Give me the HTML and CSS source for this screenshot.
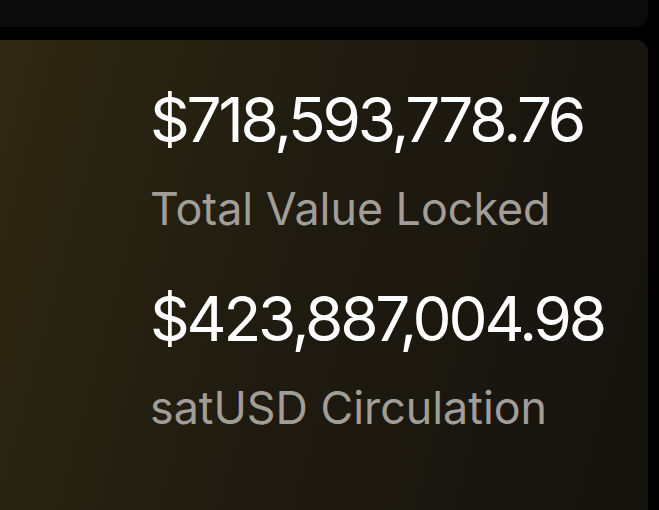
FILE: index.html
```html
<!DOCTYPE html>
<html lang="en">
<head>
    <meta charset="UTF-8">
    <meta name="viewport" content="width=device-width, initial-scale=1.0">
    <title>Protocol Stats</title>
    <link rel="stylesheet" href="styles.css">
</head>
<body>
    <div class="page">
        <div class="top-card"></div>

        <div class="stats-card">
            <div class="stat">
                <div class="stat-value">$718,593,778.76</div>
                <div class="stat-label">Total Value Locked</div>
            </div>
            <div class="stat">
                <div class="stat-value">$423,887,004.98</div>
                <div class="stat-label">satUSD Circulation</div>
            </div>
        </div>
    </div>
</body>
</html>
```

FILE: styles.css
```css
/* Reset */
* {
    margin: 0;
    padding: 0;
    box-sizing: border-box;
}

body {
    font-family: Inter, "Noto Sans", Arial, sans-serif;
    background-color: #000000;
    color: #ffffff;
    height: 510px;
    overflow: hidden;
}

.page {
    display: flex;
    flex-direction: column;
    gap: 13px;
    padding-right: 11px;
}

/* cut-off card above */
.top-card {
    height: 27px;
    background-color: #0b0b0b;
    border-radius: 0 0 12px 0;
}

.stats-card {
    height: 480px;
    border-radius: 0 12px 0 0;
    background: linear-gradient(105deg, #2f2812 0%, #1f1b10 45%, #15130f 100%);
    padding: 49px 0 0 150px;
    display: flex;
    flex-direction: column;
    gap: 56px;
}

.stat {
    display: flex;
    flex-direction: column;
    gap: 36px;
}

.stat-value {
    font-size: 62px;
    line-height: 62px;
    letter-spacing: -3.2px;
    font-weight: 400;
}

.stat-label {
    font-size: 44.8px;
    line-height: 45px;
    color: #a19e98;
}
```
